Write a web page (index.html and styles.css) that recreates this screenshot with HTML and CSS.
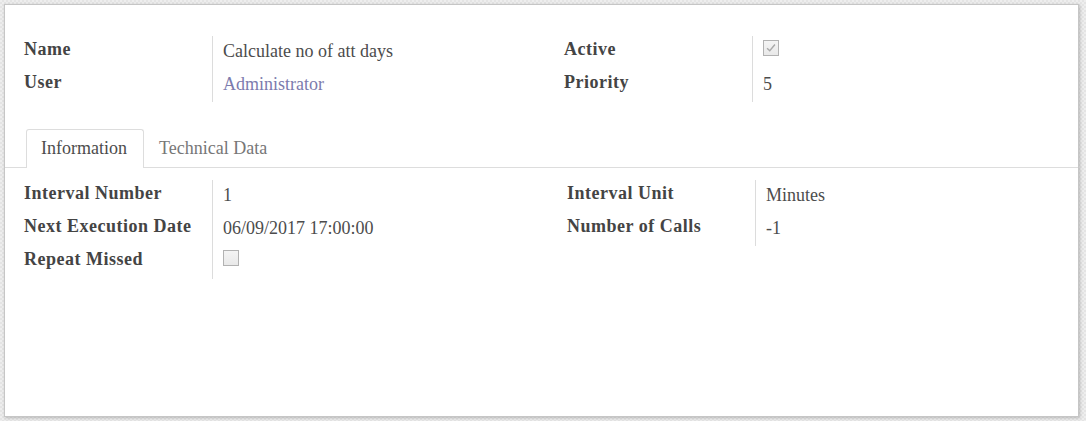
FILE: index.html
```html
<!DOCTYPE html>
<html>
<head>
<meta charset="utf-8">
<link rel="stylesheet" href="styles.css">
</head>
<body>
<div class="sheet">
  <div class="groups top">
    <div class="group g-left">
      <div class="lbl">Name</div><div class="val">Calculate no of att days</div>
      <div class="lbl">User</div><div class="val"><a class="link">Administrator</a></div>
    </div>
    <div class="group g-right">
      <div class="lbl">Active</div><div class="val"><span class="cb checked"><svg viewBox="0 0 16 16" width="14" height="14"><path d="M3.5 8.2 L6.6 11.2 L12.5 4" fill="none" stroke="#a9a9a9" stroke-width="1.6"/></svg></span></div>
      <div class="lbl">Priority</div><div class="val">5</div>
    </div>
  </div>
  <ul class="tabs">
    <li class="tab active">Information</li>
    <li class="tab">Technical Data</li>
  </ul>
  <div class="groups bottom">
    <div class="group g-left2">
      <div class="lbl">Interval Number</div><div class="val">1</div>
      <div class="lbl">Next Execution Date</div><div class="val">06/09/2017 17:00:00</div>
      <div class="lbl">Repeat Missed</div><div class="val"><span class="cb"></span></div>
    </div>
    <div class="group g-right">
      <div class="lbl">Interval Unit</div><div class="val">Minutes</div>
      <div class="lbl">Number of Calls</div><div class="val">-1</div>
    </div>
  </div>
</div>
</body>
</html>
```
FILE: styles.css
```css
html, body {
  margin: 0;
  padding: 0;
}
body {
  width: 1086px;
  height: 421px;
  overflow: hidden;
  background-color: #e9e9e9;
  background-image: repeating-conic-gradient(#e4e4e4 0 25%, #eeeeee 0 50%);
  background-size: 4px 4px;
  font-family: "Liberation Serif", "Times New Roman", serif;
  font-size: 18px;
  color: #4c4c4c;
}
.sheet {
  margin: 4px 0 0 4px;
  width: 1073px;
  height: 411px;
  border: 1px solid #c6c6c6;
  background: #ffffff;
  box-shadow: 1px 1px 3px rgba(0, 0, 0, 0.22);
}
.groups {
  display: flex;
  align-items: flex-start;
  padding-left: 19px;
}
.groups.top {
  padding-top: 31px;
}
.group {
  display: grid;
  grid-template-columns: 188px 1fr;
  grid-auto-rows: 33px;
}
.g-left { width: 540px; }
.g-left2 { width: 543px; }
.g-right { flex: 1; }
.lbl {
  font-weight: bold;
  letter-spacing: 0.5px;
  color: #444444;
  padding-top: 3px;
  line-height: 20px;
  white-space: nowrap;
}
.val {
  border-left: 1px solid #dcdcdc;
  padding: 5px 0 0 10px;
  line-height: 20px;
  color: #4c4c4c;
}
.link {
  color: #7c7bad;
  text-decoration: none;
}
.cb {
  display: inline-block;
  box-sizing: border-box;
  width: 16px;
  height: 16px;
  border: 1px solid #b2b2b2;
  background: linear-gradient(#f4f4f4, #e9e9e9);
  vertical-align: top;
  margin-top: -1px;
}
.cb svg {
  display: block;
}
.tabs {
  list-style: none;
  margin: 27px 0 0 0;
  padding: 0 0 0 21px;
  display: flex;
  border-bottom: 1px solid #dddddd;
}
.tab {
  padding: 8px 16px 9px 14px;
  line-height: 20px;
  border: 1px solid transparent;
  border-bottom: none;
  border-radius: 3px 3px 0 0;
  color: #777777;
  margin-bottom: -1px;
}
.tab.active {
  border-color: #dddddd;
  background: #ffffff;
  color: #4c4c4c;
  padding-bottom: 10px;
}
.groups.bottom {
  padding-top: 12px;
}
```
